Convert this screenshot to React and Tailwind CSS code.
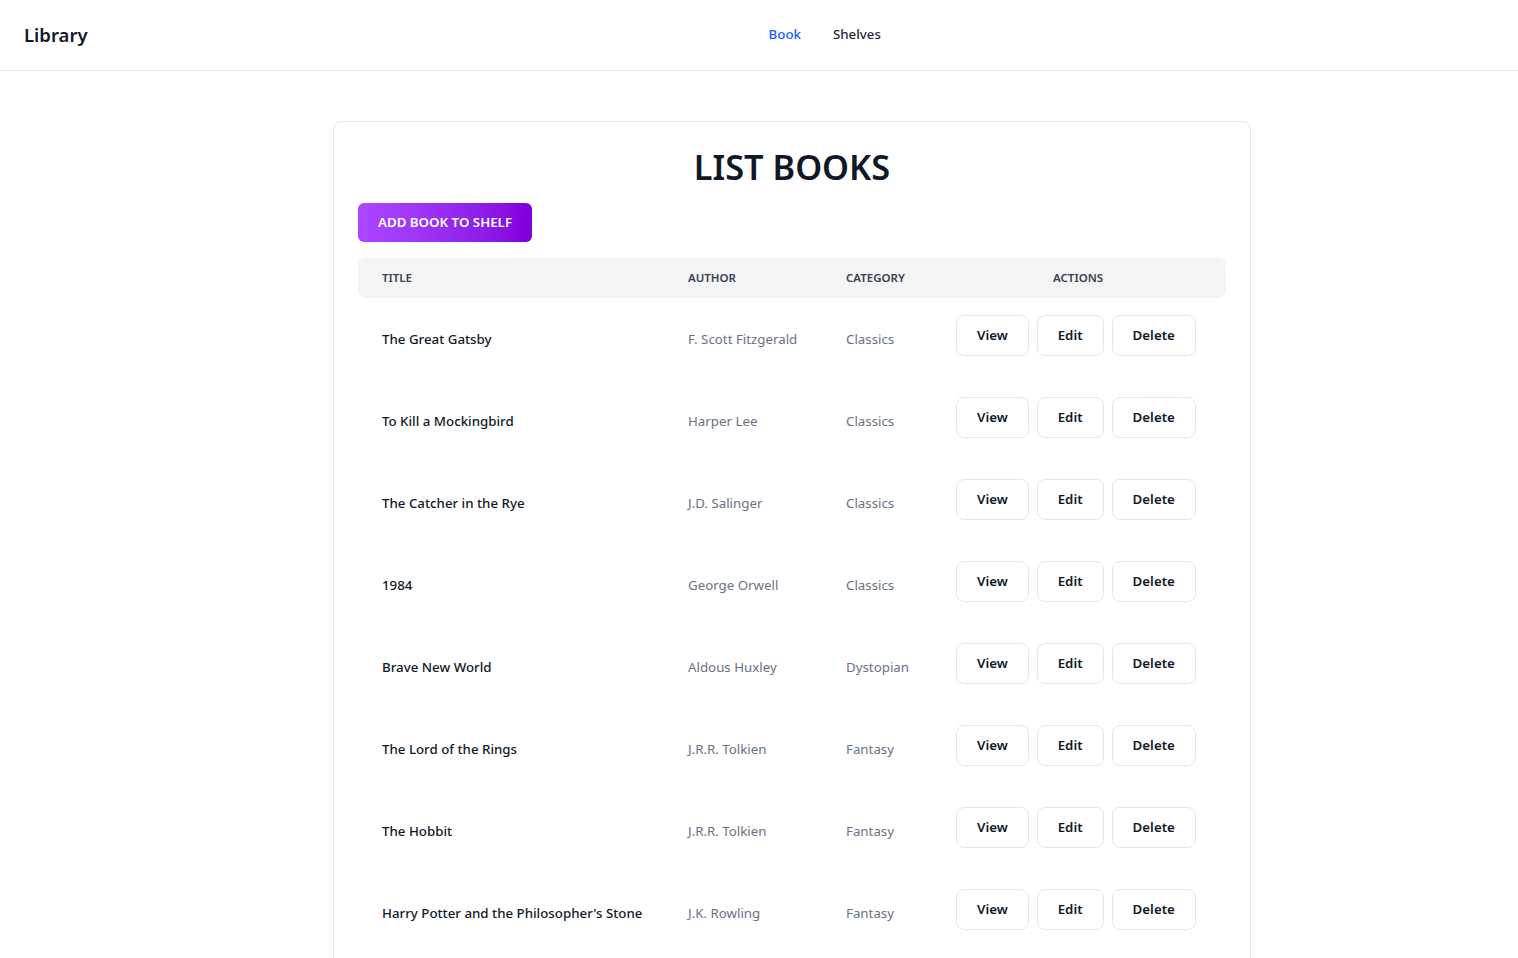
const BOOKS = [
  { title: 'The Great Gatsby', author: 'F. Scott Fitzgerald', category: 'Classics' },
  { title: 'To Kill a Mockingbird', author: 'Harper Lee', category: 'Classics' },
  { title: 'The Catcher in the Rye', author: 'J.D. Salinger', category: 'Classics' },
  { title: '1984', author: 'George Orwell', category: 'Classics' },
  { title: 'Brave New World', author: 'Aldous Huxley', category: 'Dystopian' },
  { title: 'The Lord of the Rings', author: 'J.R.R. Tolkien', category: 'Fantasy' },
  { title: 'The Hobbit', author: 'J.R.R. Tolkien', category: 'Fantasy' },
  { title: "Harry Potter and the Philosopher's Stone", author: 'J.K. Rowling', category: 'Fantasy' },
]

const COLS = 'grid grid-cols-[306px_158px_110px_1fr]'

function ActionButton({ children }) {
  return (
    <button className="h-[41px] px-5 rounded-lg border border-gray-200 bg-white text-[13.3px] font-semibold text-gray-900">
      {children}
    </button>
  )
}

export default function App() {
  return (
    <div className="min-h-screen bg-white text-gray-900" style={{ fontFamily: '"Noto Sans", "Open Sans", sans-serif' }}>
      <header className="h-[71px] border-b border-gray-200 flex items-center px-6">
        <span className="text-[18.5px] font-semibold text-gray-900">Library</span>
        <nav className="ml-[681px] flex items-center gap-8 text-[13.3px] font-medium">
          <a className="text-blue-600">Book</a>
          <a className="text-gray-800">Shelves</a>
        </nav>
      </header>

      <main className="pt-[50px]">
        <div className="ml-[333px] w-[918px] border border-gray-200 rounded-lg p-6">
          <h1 className="pt-px text-[34.3px] font-semibold text-center text-gray-900 leading-10">LIST BOOKS</h1>
          <button className="mt-4 h-[39px] px-5 rounded-md bg-gradient-to-r from-purple-500 to-purple-700 text-white text-[13.3px] font-semibold">
            ADD BOOK TO SHELF
          </button>

          <div className="mt-4">
            <div className={`${COLS} h-10 items-center bg-gray-100 rounded-lg text-[11.5px] font-semibold text-gray-700 uppercase`}>
              <div className="pl-6">Title</div>
              <div className="pl-6">Author</div>
              <div className="pl-6">Category</div>
              <div className="pl-[121px]">Actions</div>
            </div>

            {BOOKS.map((b) => (
              <div key={b.title} className={`${COLS} h-[82px] items-start text-[13.3px]`}>
                <div className="pl-6 pt-[31px] leading-5 font-medium text-gray-900">{b.title}</div>
                <div className="pl-6 pt-[31px] leading-5 text-gray-500">{b.author}</div>
                <div className="pl-6 pt-[31px] leading-5 text-gray-500">{b.category}</div>
                <div className="pl-6 pt-[17px] flex gap-2">
                  <ActionButton>View</ActionButton>
                  <ActionButton>Edit</ActionButton>
                  <ActionButton>Delete</ActionButton>
                </div>
              </div>
            ))}
          </div>
        </div>
      </main>
    </div>
  )
}
